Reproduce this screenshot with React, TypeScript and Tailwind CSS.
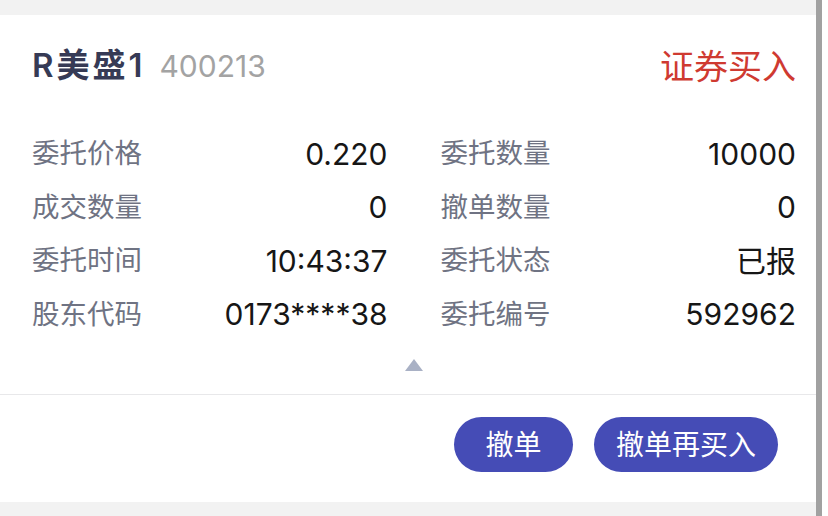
import React from 'react';

const rows: [string, string, string, string][] = [
  ['委托价格', '0.220', '委托数量', '10000'],
  ['成交数量', '0', '撤单数量', '0'],
  ['委托时间', '10:43:37', '委托状态', '已报'],
  ['股东代码', '0173****38', '委托编号', '592962'],
];

const font = { fontFamily: 'Inter, "Noto Sans CJK SC", sans-serif' };

function Cell({ label, value }: { label: string; value: string }) {
  return (
    <div className="flex h-[53.5px] items-center justify-between">
      <span className="text-[27.5px] leading-none text-[#6f7383]">{label}</span>
      <span className="text-[30px] leading-none text-[#161616]">{value}</span>
    </div>
  );
}

export default function App() {
  return (
    <div className="flex h-[516px] w-[828px] bg-white" style={font}>
      <div className="flex w-[816px] flex-col bg-[#f2f2f2] pt-[15px] pb-[14px]">
        <div className="flex flex-1 flex-col bg-white">
          <div className="flex flex-col pl-[32px] pr-[20px]">
            <div className="mt-[30px] flex h-[42px] items-center justify-between">
              <div className="flex items-baseline gap-[14px]">
                <span className="text-[33px] font-semibold tracking-[3px] text-[#363a55]">R美盛1</span>
                <span className="text-[30px] text-[#a3a3a3]">400213</span>
              </div>
              <span className="text-[34px] text-[#cf3a31]">证券买入</span>
            </div>
            <div className="mt-[40px] grid grid-cols-2 gap-x-[53px]">
              {rows.map((r) => (
                <React.Fragment key={r[0]}>
                  <Cell label={r[0]} value={r[1]} />
                  <Cell label={r[2]} value={r[3]} />
                </React.Fragment>
              ))}
            </div>
            <div className="mt-[18px] mb-[23px] flex justify-center">
              <svg width="18" height="12" viewBox="0 0 18 12">
                <path d="M9 0 L18 12 L0 12 Z" fill="#a9b1c5" />
              </svg>
            </div>
          </div>
          <div className="h-px bg-[#e8e8ea]" />
          <div className="flex justify-end gap-[21px] pt-[22px] pr-[38px]">
            <button className="h-[55px] w-[119px] rounded-full bg-[#454cb6] text-[28px] text-white">
              撤单
            </button>
            <button className="h-[55px] w-[184px] rounded-full bg-[#454cb6] text-[28px] text-white">
              撤单再买入
            </button>
          </div>
        </div>
      </div>
      <div className="w-[6px] bg-[#a1a1a1]" />
      <div className="flex-1 bg-white" />
    </div>
  );
}
